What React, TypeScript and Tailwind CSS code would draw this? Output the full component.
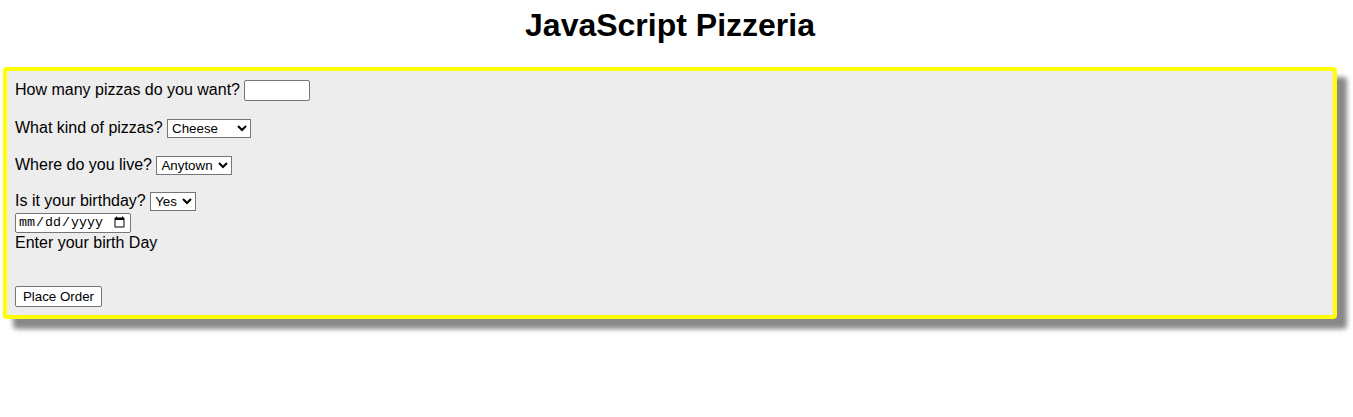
import { useState } from 'react';

export default function App() {
  const [count, setCount] = useState('');
  const [kind, setKind] = useState('Cheese');
  const [town, setTown] = useState('Anytown');
  const [birthday, setBirthday] = useState('Yes');

  const control =
    "border border-[#767676] bg-white text-black text-[13.333px] leading-[normal] font-['Liberation_Sans',Arial,sans-serif] align-baseline";

  return (
    <div className="min-h-screen bg-white text-black leading-[21px] font-['Liberation_Sans',Arial,sans-serif]">
      <div className="ml-[3px] mr-[16px] pt-[7px]">
        {/* Title */}
        <h1 className="text-center text-[32px] leading-[37px] font-bold mb-[23px]">JavaScript Pizzeria</h1>

        {/* Order form */}
        <form
          className="border-4 border-[#ffff00] rounded-[4px] bg-[#ededed] p-2 shadow-[10px_10px_5px_#888888] text-[16px]"
          onSubmit={(e) => e.preventDefault()}
        >
          <p className="mb-4">
            How many pizzas do you want?{' '}
            <input
              type="text"
              value={count}
              onChange={(e) => setCount(e.target.value)}
              className={`${control} w-[66px] h-[21px] px-[2px] rounded-[2px]`}
            />
          </p>

          <p className="mb-4">
            What kind of pizzas?{' '}
            <select value={kind} onChange={(e) => setKind(e.target.value)} className={`${control} w-[84px] h-[19px]`}>
              <option>Cheese</option>
              <option>Pepperoni</option>
              <option>Veggie</option>
            </select>
          </p>

          <p className="mb-4">
            Where do you live?{' '}
            <select value={town} onChange={(e) => setTown(e.target.value)} className={`${control} w-[76px] h-[19px]`}>
              <option>Anytown</option>
              <option>Elsewhere</option>
            </select>
          </p>

          <p className="mb-4 leading-[19px]">
            Is it your birthday?{' '}
            <select value={birthday} onChange={(e) => setBirthday(e.target.value)} className={`${control} w-[46px] h-[19px]`}>
              <option>Yes</option>
              <option>No</option>
            </select>
            <br />
            <input
              type="date"
              className="border border-[#767676] bg-white text-black text-[13.333px] leading-[normal] font-['Liberation_Mono',monospace] w-[116px] h-[20px] px-[2px] rounded-[2px] align-baseline"
            />
            <br />
            Enter your birth Day
          </p>

          <div className="h-[18px]" />
          <button
            type="submit"
            className={`${control} bg-[#efefef] w-[87px] h-[21px] px-[6px] rounded-[2px] align-top`}
          >
            Place Order
          </button>
        </form>
      </div>
    </div>
  );
}
